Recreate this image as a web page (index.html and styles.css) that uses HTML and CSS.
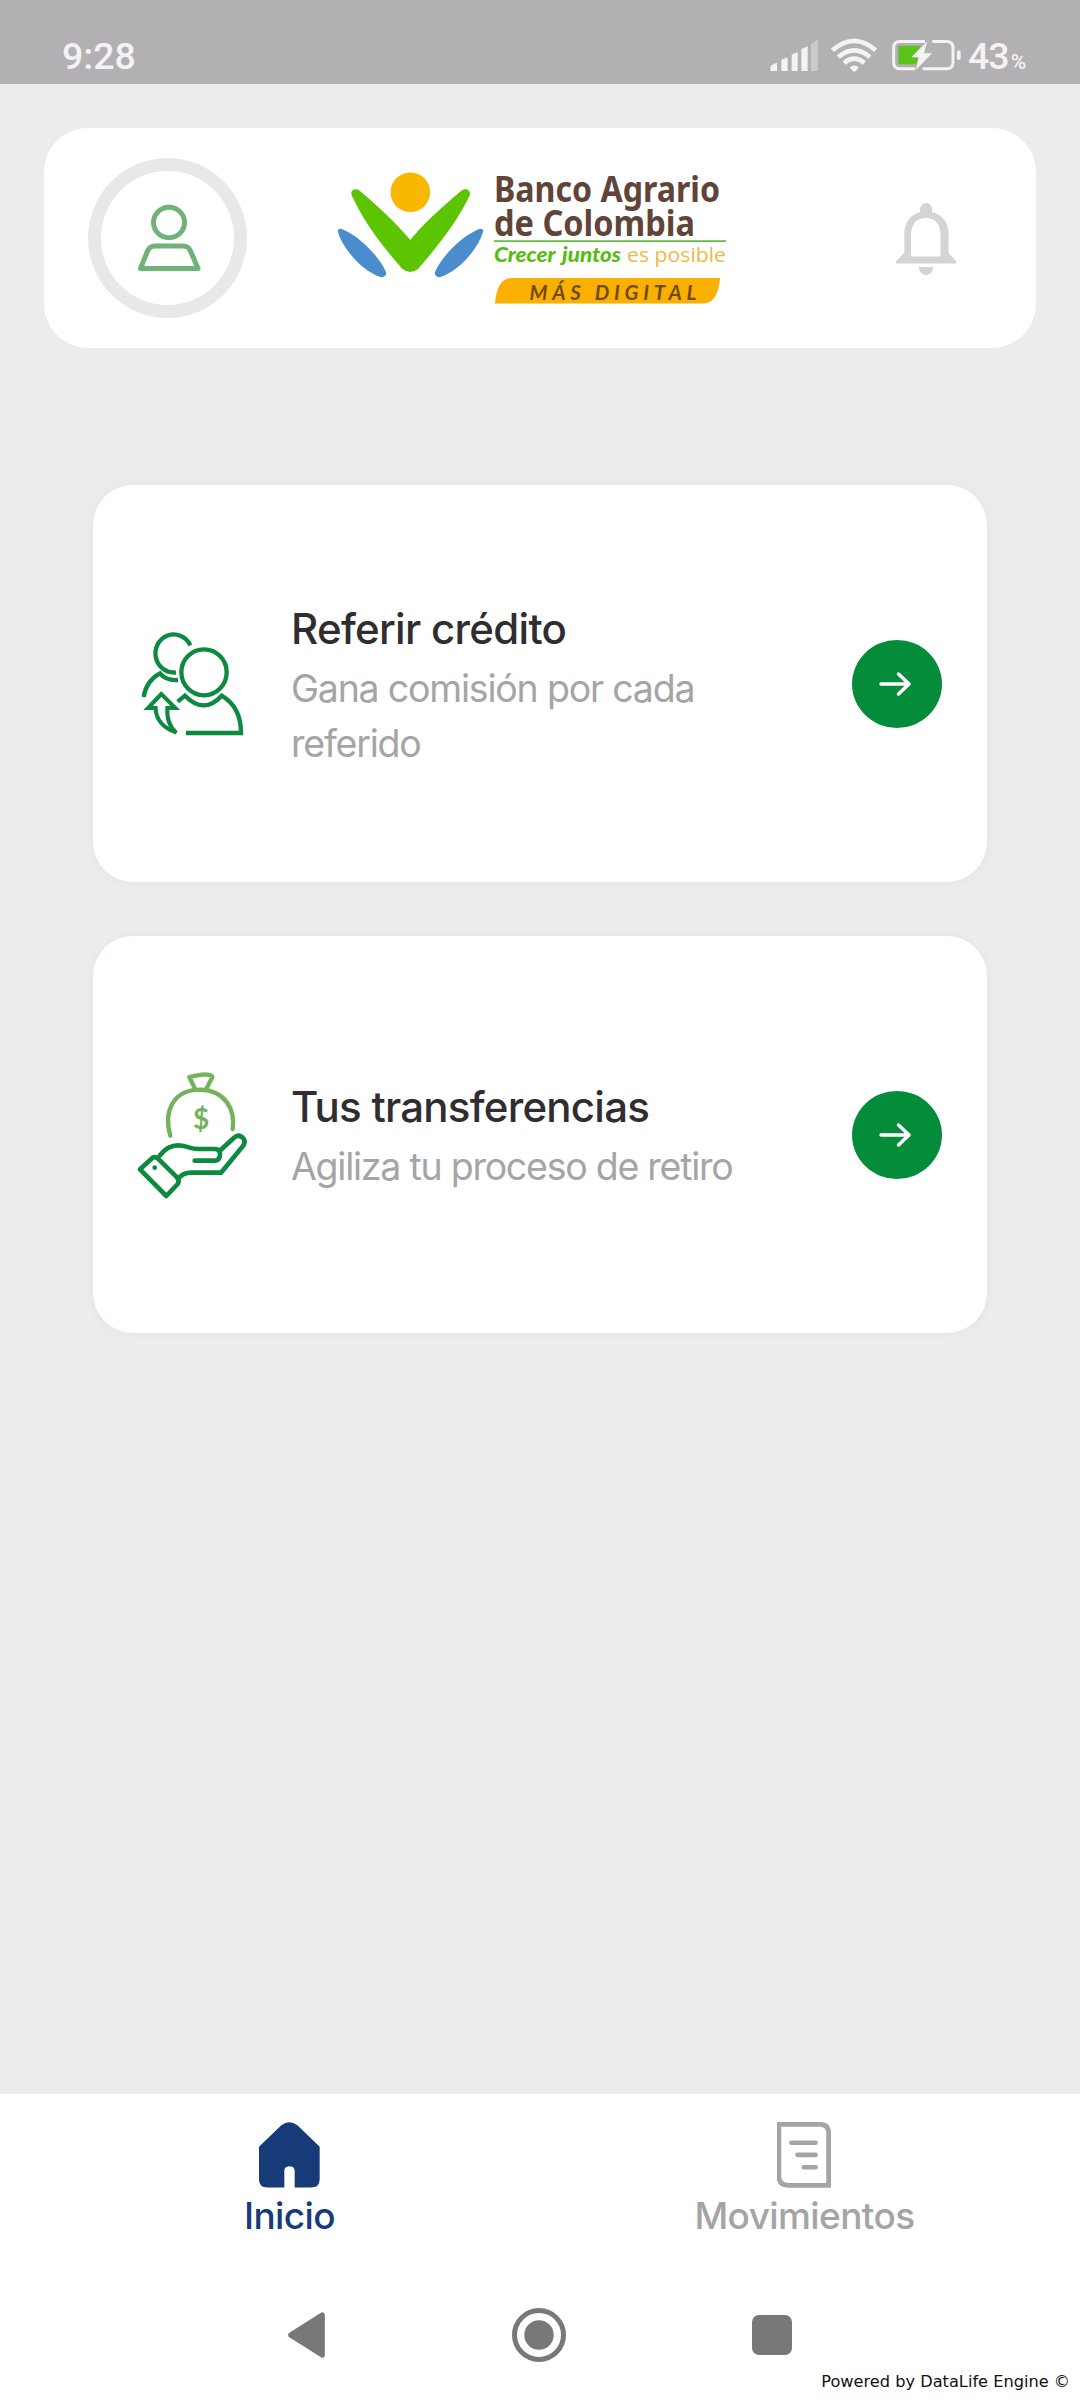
FILE: index.html
```html
<!DOCTYPE html>
<html lang="es">
<head>
<meta charset="utf-8">
<title>Banco Agrario de Colombia</title>
<link rel="stylesheet" href="styles.css">
</head>
<body>
<div class="screen">
  <div class="status">
    <span class="time">9:28</span>
    <div class="status-right">
      <svg class="status-icons" viewBox="81 45 585 120">
        <g fill="#f4f2f5">
          <path d="M91 153V141Q93 134 111 128V153ZM124 153V119L143 112V153ZM155 153V104L173 96V153ZM184 153V87L203 79V153Z"/>
          <path d="M213 153V72L233 60V153Z" opacity=".4"/>
          <path d="M330 142Q343 131 356 142Q356 147 343 156Q330 147 330 142Z"/>
        </g>
        <g fill="none" stroke="#f4f2f5" stroke-width="14">
          <path d="M277 91Q343 34 407 91M295 111Q343 71 390 111M312 129Q343 103 373 129"/>
        </g>
        <path d="M475 81Q475 77 480 77H543L518 112H535L528 133H480Q475 133 475 128Z" fill="#5cc21c"/>
        <g fill="none" stroke="#f4f2f5" stroke-width="9">
          <path d="M555 64.500H480Q461 64.500 461 84V127Q461 146.500 480 146.500H526M577 64.500H620Q639 64.500 639 84V127Q639 146.500 620 146.500H548"/>
        </g>
        <path d="M562 64L514 112H536L528 149L576 100H552Z" fill="#f4f2f5"/>
        <rect x="651" y="91" width="11" height="29" rx="5" fill="#f4f2f5"/>
      </svg>
      <span class="pct">43<small>%</small></span>
    </div>
  </div>

  <header class="header">
    <div class="avatar">
      <svg viewBox="133 200 70 76" width="70" height="76" fill="none" stroke="#70b277" stroke-width="5" stroke-linejoin="round">
        <ellipse cx="169" cy="222.500" rx="15.500" ry="15.300"/>
        <path d="M140.500 268.500L147.500 251Q149.500 246 155 246H183Q188.500 246 190.500 251L198 268.500Z"/>
      </svg>
    </div>
    <svg class="logo" viewBox="336 148 392 180" width="392" height="180">
      <ellipse cx="410.300" cy="192.200" rx="19.800" ry="19.800" fill="#f9b700"/>
      <path d="M352 196C349 190 356 187 360 191C380 208 396 223 410.300 240C424 223 441 208 461 191C465 187 472 190 469.500 196C457 222 438 246 418 269Q410.300 275 402.500 269C382 246 364 222 352 196Z" fill="#5cc400"/>
      <path d="M338 232C337 229 340 228 343 229.500C359 236 379 256 386 272C387 275.500 384 278 380.500 277C362 271 343 249 338 232Z" fill="#4b8dcc"/>
      <path d="M483 232C484 229 481 228 478 229.500C462 236 442 256 435 272C434 275.500 437 278 440.500 277C459 271 478 249 483 232Z" fill="#4b8dcc"/>
      <g class="brand">
        <text x="494" y="201.500" textLength="226" lengthAdjust="spacingAndGlyphs">Banco Agrario</text>
        <text x="494" y="235.500" textLength="201" lengthAdjust="spacingAndGlyphs">de Colombia</text>
      </g>
      <rect x="494" y="240.300" width="232" height="1.600" fill="#56b82e"/>
      <text class="grow" x="494" y="262" textLength="127" lengthAdjust="spacingAndGlyphs">Crecer juntos</text>
      <text class="possible" x="627" y="262" textLength="99" lengthAdjust="spacingAndGlyphs">es posible</text>
      <path d="M495 303.500Q497 278 512 278H720Q718 303.500 703 303.500Z" fill="#f9b000"/>
      <text class="digital" x="529.500" y="299.800" textLength="167">MÁS DIGITAL</text>
    </svg>
    <svg class="bell" viewBox="896 201 60 74" width="60" height="74" fill="#d4d3d5">
      <path fill-rule="evenodd" d="M920 212V209Q921 203 926 203Q931 203 932 209V212Q948.500 217 948.500 234V253L956 261V263.500H896V261L904.300 253V234Q904.300 217 920 212ZM911 256.500H940.500V236Q940.500 218 926 218Q911 218 911 236Z"/>
      <path d="M918.500 267H933.500Q932 275 926 275Q920 275 918.500 267Z"/>
    </svg>
  </header>

  <main class="cards">
    <section class="card">
      <svg viewBox="0 9 420 420" width="140" height="140" fill="none" stroke="#0c8a40" stroke-width="13">
        <path d="M211 103A55 57 0 1 0 168 184"/>
        <path d="M174 207Q139 210 120 187C94 201 76 225 71 258"/>
        <ellipse cx="252" cy="184" rx="68" ry="69"/>
        <path d="M173 272L195 254Q252 312 305 254Q363 288 363 366H198"/>
        <path d="M124 249L84 291H107Q108 343 169 365Q139 340 142 291H166Z" stroke-width="12"/>
      </svg>
      <div class="text">
        <h2 class="t1">Referir crédito</h2>
        <p class="p1">Gana comisión por cada<br>referido</p>
      </div>
      <div class="go"><svg viewBox="0 0 34 28" width="34" height="28"><path d="M3 14H31M20.500 4L31 14L20.500 24"/></svg></div>
    </section>
    <section class="card">
      <svg viewBox="0 13 420 480" width="140" height="160" fill="none" stroke="#0c8a40" stroke-width="14" stroke-linecap="round" stroke-linejoin="round">
        <g stroke="#74b35c" stroke-width="13">
          <path d="M151 255C130 184 158 117 241 117C315 120 346 174 338 235"/>
          <path d="M224 112L208 79C225 77 245 67 270 73Q280 76 276 82L260 112"/>
        </g>
        <text class="dollar" x="243" y="236" text-anchor="middle">$</text>
        <path d="M60 356L98 321Q106 317 114 324L171 380Q180 389 173 400L139 436Z"/>
        <path d="M119 315Q153 269 209 291Q220 295 236 295H285Q300 296 300 309Q300 330 283 330H224"/>
        <path d="M302 298L342 261Q357 248 370 263Q378 274 369 286L303 366H216Q189 365 174 385"/>
        <circle cx="104" cy="351" r="7" fill="#0c8a40" stroke="none"/>
      </svg>
      <div class="text">
        <h2 class="t2">Tus transferencias</h2>
        <p class="p2">Agiliza tu proceso de retiro</p>
      </div>
      <div class="go"><svg viewBox="0 0 34 28" width="34" height="28"><path d="M3 14H31M20.500 4L31 14L20.500 24"/></svg></div>
    </section>
  </main>

  <footer class="footer">
    <nav class="tabs">
      <div class="tab active">
        <svg viewBox="178 125 183 197" width="61" height="66"><path fill="#173a79" d="M178 199L244 135Q269 115 294 135L360 199V296Q360 321 334 321H285V270Q284 257 269 257Q254 258 254 270V321H204Q178 321 178 296Z"/></svg>
        <span>Inicio</span>
      </div>
      <div class="tab">
        <svg viewBox="350 125 164 197" width="55" height="66" fill="none" stroke="#a4a3a5" stroke-width="14"><path d="M355.500 132H479Q504 132 504 159V314H384Q355.500 314 355.500 286Z"/><path stroke-linecap="round" d="M393 187H465M411 223H465M430 260H465"/></svg>
        <span>Movimientos</span>
      </div>
    </nav>
    <div class="system">
      <svg viewBox="262 697 110 136" width="37" height="46"><path d="M270 765L364 705V825Z" fill="#7a777a" stroke="#7a777a" stroke-width="15" stroke-linejoin="round"/></svg>
      <svg viewBox="0 0 54 54" width="54" height="54"><circle cx="27" cy="27" r="24.500" fill="none" stroke="#7a777a" stroke-width="5"/><circle cx="27" cy="27" r="14.700" fill="#7a777a"/></svg>
      <div class="square"></div>
    </div>
    <div class="credit">Powered by DataLife Engine ©</div>
  </footer>
</div>
</body>
</html>
```
FILE: styles.css
```css
* { box-sizing: border-box; }
body { margin: 0; background: #edebee; font-family: Inter, "Liberation Sans", sans-serif; }
.screen { width: 1080px; height: 2400px; display: flex; flex-direction: column; overflow: hidden; }
svg { display: block; flex: none; }

.status {
  height: 84px; padding: 28px 54px 0 62px; background: #b3b0b3; color: #f4f2f5;
  display: flex; justify-content: space-between; align-items: flex-start;
  font: 500 37.500px/56px Roboto, sans-serif;
}
.status-right { display: flex; align-items: flex-start; gap: 6px; }
.status-icons { width: 195px; height: 40px; margin-top: 7px; }
.pct { width: 58px; white-space: nowrap; letter-spacing: -1px; }
.pct small { font-size: 21px; margin-left: 2px; letter-spacing: 0; }

.header {
  margin: 44px 44px 0; height: 220px; padding: 0 80px 0 44px; border-radius: 44px;
  background: #fff; display: flex; align-items: center; justify-content: space-between;
}
.avatar {
  width: 159px; height: 160px; border: 13.500px solid #e9e7ea; border-radius: 50%;
  display: flex; align-items: center; justify-content: center;
}
.logo { margin-right: 80px; }
.brand { font: 700 36px "Noto Sans", sans-serif; fill: #614438; }
.grow { font: italic 900 20.500px Lato, sans-serif; fill: #5abb16; word-spacing: 2px; }
.possible { font: 400 20.500px "Open Sans", sans-serif; fill: #eeb94a; }
.digital { font: italic 700 20.500px Lato, sans-serif; fill: #724b10; }

.cards { flex: 1; padding: 137px 93px 0; display: flex; flex-direction: column; gap: 54px; }
.card {
  height: 397px; padding: 0 45px 0 27px; border-radius: 40px; background: #fff;
  box-shadow: 0 0 12px rgba(60, 50, 60, .04);
  display: flex; align-items: center; gap: 31px;
}
.text { flex: 1; padding-top: 2px; white-space: nowrap; }
h2 { margin: 0 0 2px; font-size: 42px; line-height: 60px; font-weight: 500; color: #2f2d30; }
.t1 { letter-spacing: -.7px; }
.t2 { letter-spacing: -.75px; }
p { margin: 0; font-size: 37.500px; line-height: 55px; color: #a5a4a6; }
.p1 { letter-spacing: -1.200px; }
.p2 { letter-spacing: -1.250px; }
.dollar { font: 700 84px Lato, sans-serif; fill: #74b35c; stroke: none; }
.go {
  width: 90px; height: 88px; border-radius: 50%; background: #048c3a; padding-right: 5px;
  display: flex; align-items: center; justify-content: center;
}
.go path { fill: none; stroke: #fff; stroke-width: 3.500; stroke-linecap: round; stroke-linejoin: round; }

.footer { height: 306px; background: #fff; display: flex; flex-direction: column; }
.tabs { display: grid; grid-template-columns: 515px 515px; padding: 28px 32px 0; }
.tab {
  display: flex; flex-direction: column; align-items: center; gap: 4px;
  font-size: 37px; line-height: 47px; font-weight: 500; letter-spacing: -.6px; color: #a4a3a5;
}
.active { color: #173a79; }
.system {
  margin: 66px 0 0; padding: 0 288px; height: 60px;
  display: flex; align-items: center; justify-content: space-between;
}
.square { width: 40px; height: 40px; border-radius: 7px; background: #7a777a; }
.credit {
  margin-top: 7px; padding-right: 10px; text-align: right; color: #111;
  font: 16.200px/20px "DejaVu Sans", sans-serif;
}
```
